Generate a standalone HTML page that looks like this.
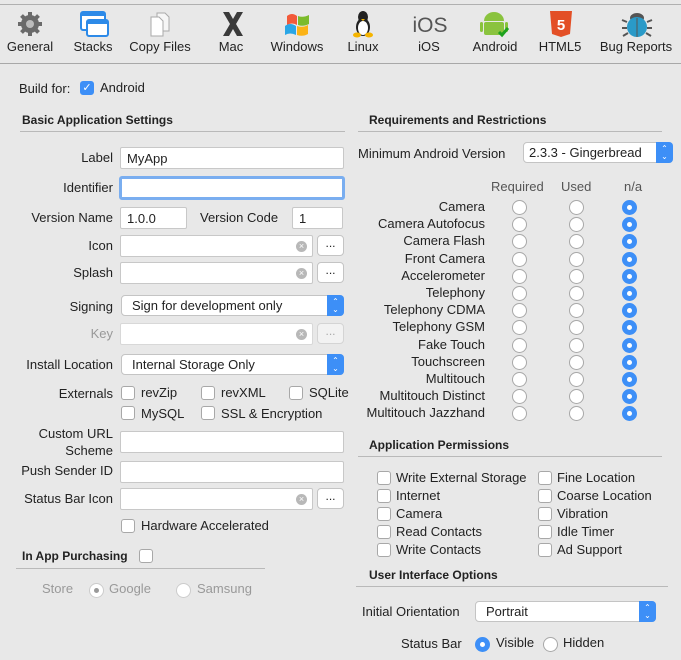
<!DOCTYPE html>
<html><head><meta charset="utf-8"><style>
*{box-sizing:border-box;margin:0;padding:0}
body{width:681px;height:660px;background:#e8e8e8;font-family:"Liberation Sans",Arial,sans-serif;font-size:13px;color:#222;position:relative;overflow:hidden}
.a{position:absolute;white-space:nowrap;line-height:16px}
.r{text-align:right}
.b{font-weight:bold;font-size:12px}
.f{position:absolute;height:22px;background:#fff;border:1px solid #c8c8c8;border-radius:2px;font-size:13px;padding:3px 6px;line-height:15px}
.x{position:absolute;right:5px;top:5px;width:11px;height:11px;border-radius:50%;background:#b8b8b8;color:#fff;font-size:9px;line-height:11px;text-align:center}
.btn{position:absolute;height:21px;width:27px;background:#fff;border:1px solid #c4c4c4;border-radius:4px;text-align:center;line-height:14px;font-size:12px}
.p{position:absolute;height:21px;background:#fff;border:1px solid #c4c4c4;border-radius:4px;padding:2px 10px;line-height:15px}
.p i{position:absolute;right:-1px;top:-1px;width:17px;height:21px;background:#3d8ff7;border-radius:0 4px 4px 0;color:#fff;font-style:normal;font-size:8px;line-height:8px;text-align:center;padding-top:3px}
.cb{position:absolute;width:14px;height:14px;background:#fff;border:1px solid #a8a8a8;border-radius:3px}
.rd{position:absolute;width:15px;height:15px;background:#fff;border:1px solid #a8a8a8;border-radius:50%}
.rs{position:absolute;width:15px;height:15px;background:#3d8ff7;border-radius:50%}
.rs:after{content:"";position:absolute;left:5px;top:5px;width:5px;height:5px;background:#fff;border-radius:50%}
.ln{position:absolute;height:1px;background:#b9b9b9}
.tb{position:absolute;top:39px;font-size:13px;text-align:center;width:80px}
</style></head><body>
<div class="ln" style="top:4px;left:0;width:681px;background:#b0b0b0"></div>
<div class="ln" style="top:63px;left:0;width:681px;background:#a8a8a8"></div>
<!-- toolbar icons -->
<svg style="position:absolute;left:0;top:8px" width="681" height="32">
<g transform="translate(30,16)" fill="#6a6a6a"><circle r="9"/><g stroke="#6a6a6a" stroke-width="4"><line x1="0" y1="-12" x2="0" y2="12"/><line x1="-12" y1="0" x2="12" y2="0"/><line x1="-8.5" y1="-8.5" x2="8.5" y2="8.5"/><line x1="-8.5" y1="8.5" x2="8.5" y2="-8.5"/></g><circle r="4" fill="#bbb"/></g>
<rect x="81" y="4" width="24" height="18" rx="2" fill="#fff" stroke="#2d8ae8" stroke-width="2"/><rect x="81" y="4" width="24" height="4" fill="#2d8ae8"/>
<rect x="87" y="12" width="21" height="16" rx="2" fill="#fff" stroke="#2d8ae8" stroke-width="2"/><rect x="87" y="12" width="21" height="4" fill="#2d8ae8"/>
<path d="M157 5h8l4 4v14h-12z" fill="#f6f6f6" stroke="#aaa"/><path d="M151 9h8l4 4v15h-12z" fill="#fff" stroke="#aaa"/>
<path d="M223 4h6l4 7 4-7h6l-7 12 7 12h-6l-4-7-4 7h-6l7-12z" fill="#3a3a3a"/>
<path d="M287 8q5-4 10 0v9q-5-3-10 0z" fill="#f25a3a"/><path d="M298 8q5 2 11-1v9q-6 3-11 1z" fill="#7cbb2c"/><path d="M285 18q5-4 11 0v9q-6-3-11 0z" fill="#2aa6e6"/><path d="M297 18q6 2 11-1v9q-5 3-11 1z" fill="#fbb316"/>
<g transform="translate(363,0)"><ellipse cx="0" cy="9" rx="5" ry="6" fill="#222"/><ellipse cx="0" cy="19" rx="7" ry="9" fill="#222"/><ellipse cx="0" cy="20" rx="5" ry="7" fill="#fff"/><ellipse cx="-6" cy="27" rx="4" ry="2.5" fill="#f5b400"/><ellipse cx="6" cy="27" rx="4" ry="2.5" fill="#f5b400"/><path d="M-2 11h4l-2 2z" fill="#f5b400"/></g>
<text x="430" y="24" font-size="21" fill="#555" text-anchor="middle" font-family="Liberation Sans">iOS</text>
<g fill="#8ac33e"><path d="M484 13a10 9 0 0 1 20 0z"/><rect x="484" y="14" width="20" height="13" rx="2"/><rect x="480" y="14" width="3" height="10" rx="1.5"/><rect x="505" y="14" width="3" height="10" rx="1.5"/></g><path d="M499 24l3 3 6-7" stroke="#1ea21e" stroke-width="3" fill="none"/>
<path d="M550 3h22l-2 23-9 3-9-3z" fill="#e34f26"/><text x="561" y="22" font-size="15" font-weight="bold" fill="#fff" text-anchor="middle" font-family="Liberation Sans">5</text>
<g transform="translate(637,16)"><ellipse cx="0" cy="-6" rx="7" ry="5" fill="#555"/><ellipse cx="0" cy="3" rx="10" ry="10" fill="#2a9ac8"/><line x1="0" y1="-6" x2="0" y2="13" stroke="#555"/><g stroke="#555" stroke-width="2"><line x1="-10" y1="-2" x2="-15" y2="-4"/><line x1="10" y1="-2" x2="15" y2="-4"/><line x1="-10" y1="4" x2="-15" y2="4"/><line x1="10" y1="4" x2="15" y2="4"/><line x1="-9" y1="9" x2="-14" y2="12"/><line x1="9" y1="9" x2="14" y2="12"/></g></g>
</svg>
<div class="tb" style="left:-10px">General</div>
<div class="tb" style="left:53px">Stacks</div>
<div class="tb" style="left:120px">Copy Files</div>
<div class="tb" style="left:191px">Mac</div>
<div class="tb" style="left:257px">Windows</div>
<div class="tb" style="left:323px">Linux</div>
<div class="tb" style="left:389px">iOS</div>
<div class="tb" style="left:455px">Android</div>
<div class="tb" style="left:520px">HTML5</div>
<div class="tb" style="left:596px">Bug Reports</div>

<!-- left -->
<div class="a" style="left:19px;top:81px">Build for:</div>
<div class="cb" style="left:80px;top:81px;background:#3d8ff7;border-color:#3d8ff7;color:#fff;font-size:11px;line-height:12px;text-align:center">✓</div>
<div class="a" style="left:100px;top:80px">Android</div>
<div class="a b" style="left:22px;top:112px">Basic Application Settings</div>
<div class="ln" style="left:20px;top:131px;width:325px"></div>

<div class="a r" style="left:0;width:113px;top:150px">Label</div>
<div class="f" style="left:120px;top:147px;width:224px">MyApp</div>
<div class="a r" style="left:0;width:113px;top:180px">Identifier</div>
<div class="f" style="left:119px;top:176px;width:226px;height:24px;border:3px solid #7aaef0;border-radius:3px"></div>
<div class="a r" style="left:0;width:113px;top:210px">Version Name</div>
<div class="f" style="left:120px;top:207px;width:67px">1.0.0</div>
<div class="a" style="left:200px;top:210px">Version Code</div>
<div class="f" style="left:292px;top:207px;width:51px">1</div>
<div class="a r" style="left:0;width:113px;top:238px">Icon</div>
<div class="f" style="left:120px;top:235px;width:193px"><span class="x">×</span></div><div class="btn" style="left:317px;top:235px">...</div>
<div class="a r" style="left:0;width:113px;top:265px">Splash</div>
<div class="f" style="left:120px;top:262px;width:193px"><span class="x">×</span></div><div class="btn" style="left:317px;top:262px">...</div>
<div class="a r" style="left:0;width:113px;top:299px">Signing</div>
<div class="p" style="left:121px;top:295px;width:223px">Sign for development only<i>⌃<br>⌄</i></div>
<div class="a r" style="left:0;width:113px;top:326px;color:#999">Key</div>
<div class="f" style="left:120px;top:323px;width:193px;border-color:#d8d8d8"><span class="x">×</span></div><div class="btn" style="left:317px;top:323px;color:#aaa;background:#f2f2f2;border-color:#d4d4d4">...</div>
<div class="a r" style="left:0;width:113px;top:357px">Install Location</div>
<div class="p" style="left:121px;top:354px;width:223px">Internal Storage Only<i>⌃<br>⌄</i></div>
<div class="a r" style="left:0;width:113px;top:386px">Externals</div>
<div class="cb" style="left:121px;top:386px"></div><div class="a" style="left:141px;top:385px">revZip</div>
<div class="cb" style="left:201px;top:386px"></div><div class="a" style="left:221px;top:385px">revXML</div>
<div class="cb" style="left:289px;top:386px"></div><div class="a" style="left:309px;top:385px">SQLite</div>
<div class="cb" style="left:121px;top:406px"></div><div class="a" style="left:141px;top:406px">MySQL</div>
<div class="cb" style="left:201px;top:406px"></div><div class="a" style="left:221px;top:406px;width:101px;overflow:hidden">SSL &amp; Encryption</div>
<div class="a r" style="left:0;width:113px;top:426px">Custom URL</div>
<div class="a r" style="left:0;width:113px;top:443px">Scheme</div>
<div class="f" style="left:120px;top:431px;width:224px"></div>
<div class="a r" style="left:0;width:113px;top:463px">Push Sender ID</div>
<div class="f" style="left:120px;top:461px;width:224px"></div>
<div class="a r" style="left:0;width:113px;top:491px">Status Bar Icon</div>
<div class="f" style="left:120px;top:488px;width:193px"><span class="x">×</span></div><div class="btn" style="left:317px;top:488px">...</div>
<div class="cb" style="left:121px;top:519px"></div><div class="a" style="left:141px;top:518px">Hardware Accelerated</div>
<div class="a b" style="left:22px;top:548px">In App Purchasing</div>
<div class="cb" style="left:139px;top:549px"></div>
<div class="ln" style="left:16px;top:568px;width:249px"></div>
<div class="a" style="left:42px;top:581px;color:#999">Store</div>
<div class="rd" style="left:89px;top:583px;border-color:#ccc"></div><div style="position:absolute;left:94px;top:588px;width:5px;height:5px;border-radius:50%;background:#999"></div>
<div class="a" style="left:109px;top:581px;color:#999">Google</div>
<div class="rd" style="left:176px;top:583px;border-color:#ccc"></div>
<div class="a" style="left:197px;top:581px;color:#999">Samsung</div>

<!-- right -->
<div class="a b" style="left:369px;top:112px">Requirements and Restrictions</div>
<div class="ln" style="left:358px;top:131px;width:304px"></div>
<div class="a" style="left:358px;top:146px">Minimum Android Version</div>
<div class="p" style="left:523px;top:142px;width:150px;padding-left:5px">2.3.3 - Gingerbread<i>⌃<br>⌄</i></div>
<div class="a" style="left:491px;top:179px;color:#555">Required</div>
<div class="a" style="left:561px;top:179px;color:#555">Used</div>
<div class="a" style="left:624px;top:179px;color:#555">n/a</div>
<div id="rows"></div>
<div class="a b" style="left:369px;top:437px">Application Permissions</div>
<div class="ln" style="left:358px;top:456px;width:304px"></div>
<div class="a b" style="left:369px;top:567px">User Interface Options</div>
<div class="ln" style="left:356px;top:586px;width:312px"></div>
<div class="a" style="left:362px;top:604px">Initial Orientation</div>
<div class="p" style="left:475px;top:601px;width:181px">Portrait<i>⌃<br>⌄</i></div>
<div class="a" style="left:401px;top:636px">Status Bar</div>
<div class="rs" style="left:475px;top:637px"></div><div class="a" style="left:496px;top:635px">Visible</div>
<div class="rd" style="left:543px;top:637px"></div><div class="a" style="left:563px;top:635px">Hidden</div>
<script>
var L=["Camera","Camera Autofocus","Camera Flash","Front Camera","Accelerometer","Telephony","Telephony CDMA","Telephony GSM","Fake Touch","Touchscreen","Multitouch","Multitouch Distinct","Multitouch Jazzhand"],h="";
L.forEach(function(t,i){var y=Math.round(199+i*17.2);h+='<div class="a r" style="left:300px;width:185px;top:'+y+'px">'+t+'</div><div class="rd" style="left:512px;top:'+(y+1)+'px"></div><div class="rd" style="left:569px;top:'+(y+1)+'px"></div><div class="rs" style="left:622px;top:'+(y+1)+'px"></div>';});
var P=[["Write External Storage","Fine Location"],["Internet","Coarse Location"],["Camera","Vibration"],["Read Contacts","Idle Timer"],["Write Contacts","Ad Support"]];
P.forEach(function(p,i){var y=470+i*18;h+='<div class="cb" style="left:377px;top:'+(y+1)+'px"></div><div class="a" style="left:396px;top:'+y+'px">'+p[0]+'</div><div class="cb" style="left:538px;top:'+(y+1)+'px"></div><div class="a" style="left:557px;top:'+y+'px">'+p[1]+'</div>';});
document.getElementById("rows").innerHTML=h;
</script>
</body></html>
